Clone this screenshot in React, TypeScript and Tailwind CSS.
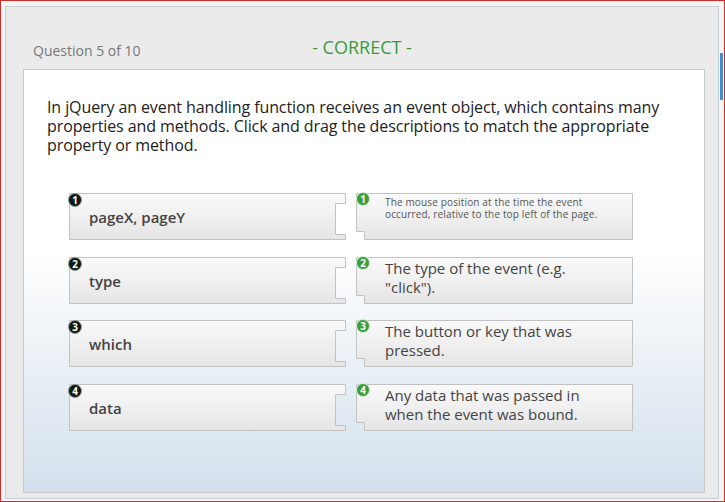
import { useId } from "react";

type Row = { n: number; term: string; desc: string; small?: boolean; gap: string };

const rows: Row[] = [
  {
    n: 1,
    term: "pageX, pageY",
    desc: "The mouse position at the time the event\noccurred, relative to the top left of the page.",
    small: true,
    gap: "",
  },
  { n: 2, term: "type", desc: 'The type of the event (e.g. "click").', gap: "mt-[17px]" },
  { n: 3, term: "which", desc: "The button or key that was pressed.", gap: "mt-[16px]" },
  { n: 4, term: "data", desc: "Any data that was passed in when the event was bound.", gap: "mt-[17px]" },
];

function Shape({ side }: { side: "left" | "right" }) {
  const id = useId();
  const d =
    side === "left"
      ? "M0.5,0.5 H276.5 V10.5 H266.5 V41.5 H276.5 V46.5 H0.5 Z"
      : "M0.5,0.5 H276.5 V46.5 H8.5 V38.5 H0.5 Z";
  return (
    <svg className="absolute inset-0" width={277} height={47} viewBox="0 0 277 47">
      <defs>
        <linearGradient id={id} x1="0" y1="0" x2="0" y2="1">
          <stop offset="0" stopColor="#fafafa" />
          <stop offset="1" stopColor="#e5e5e5" />
        </linearGradient>
      </defs>
      <path d={d} fill={`url(#${id})`} stroke="#c2c2c2" strokeWidth={1} />
    </svg>
  );
}

function Badge({ n, green }: { n: number; green?: boolean }) {
  return (
    <div
      className={
        green
          ? "absolute left-0 top-[-1px] flex h-[14px] w-[14px] items-center justify-center rounded-full border border-[#d9ecd9] bg-[#3a9e3a] text-[10px] font-bold leading-none text-white"
          : "absolute left-[-1px] top-0 flex h-[14px] w-[14px] items-center justify-center rounded-full border border-[#8e9a90] bg-[#0f1a12] text-[10px] font-bold leading-none text-white"
      }
    >
      {n}
    </div>
  );
}

function MatchRow({ row }: { row: Row }) {
  return (
    <div className={`flex gap-[10px] ${row.gap}`}>
      <div className="relative h-[47px] w-[277px]">
        <Shape side="left" />
        <div className="relative flex h-full items-center pl-[20px] pt-[1px] text-[15px] font-semibold text-[#444]">
          {row.term}
        </div>
        <Badge n={row.n} />
      </div>
      <div className="relative h-[47px] w-[277px]">
        <Shape side="right" />
        {row.small ? (
          <div className="relative whitespace-pre-line pl-[29px] pr-[8px] pt-[3px] text-[10px] leading-[12px] tracking-[0.15px] text-[#555]">
            {row.desc}
          </div>
        ) : (
          <div className="relative pl-[29px] pr-[40px] pt-[2px] text-[15px] leading-[19px] text-[#444]">
            {row.desc}
          </div>
        )}
        <Badge n={row.n} green />
      </div>
    </div>
  );
}

export default function App() {
  return (
    <div className="flex h-[502px] w-[725px] border border-[#d42a2a] bg-[#f6f6f6] pl-[4px] pt-[5px] pb-[2px] font-['Open_Sans',sans-serif]">
      <div className="flex flex-1 flex-col border border-[#c7cdd5] bg-[#ebebeb] pl-[17px] pr-[13px] pb-[5px]">
        <div className="flex h-[62px] items-end pb-[8px]">
          <div className="w-[148px] pl-[10px] text-[14px] text-[#777]">Question 5 of 10</div>
          <div className="w-[382px] text-center text-[18px] text-[#3a9a3a]">- CORRECT -</div>
        </div>
        <div className="flex-1 border border-[#c9c9c9] bg-[linear-gradient(to_bottom,#ffffff_0%,#ffffff_42%,#d3e0ec_100%)] pl-[23px] pt-[28px]">
          <p className="text-[16px] leading-[19px] tracking-[-0.1px] text-[#222]">
            In jQuery an event handling function receives an event object, which contains many
            <br />
            properties and methods. Click and drag the descriptions to match the appropriate
            <br />
            property or method.
          </p>
          <div className="mt-[38px] flex flex-col pl-[22px]">
            {rows.map((r) => (
              <MatchRow key={r.n} row={r} />
            ))}
          </div>
        </div>
      </div>
      <div className="w-[5px] pl-[1px] pt-[47px]">
        <div className="h-[47px] w-[3px] bg-[#3f8fd0]" />
      </div>
    </div>
  );
}
